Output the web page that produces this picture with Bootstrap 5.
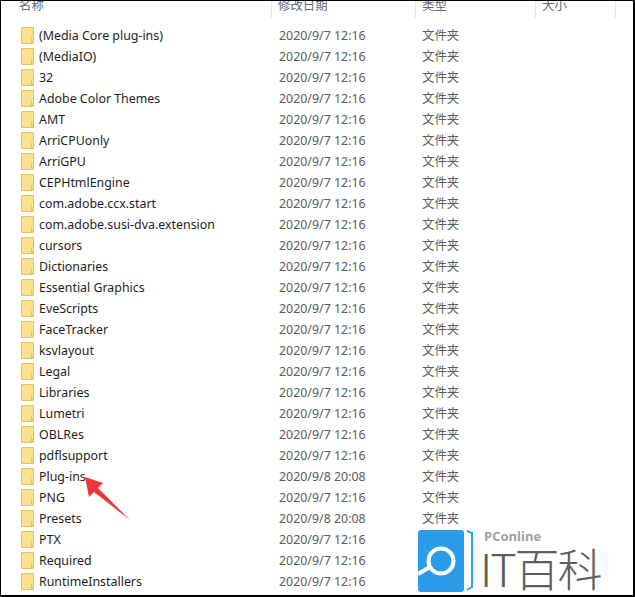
<!DOCTYPE html>
<html lang="zh-CN">
<head>
  <meta charset="UTF-8" />
  <title>Plug-ins</title>
  <link href="https://cdn.jsdelivr.net/npm/bootstrap@5.3.2/dist/css/bootstrap.min.css" rel="stylesheet" />
  <style>
    html, body { height: 597px; overflow: hidden; background: #fff; }
    .shot-frame {
      position: relative;
      height: 597px;
      overflow: hidden;
      border: solid #000;
      border-width: 1px 2px 2px 1px;
      font-family: "Noto Sans", "Noto Sans CJK SC", sans-serif;
      font-size: 12.4px;
    }
    .head-row { height: 22px; margin-top: -5px; margin-bottom: 7px; color: #5f6b76; }
    .head-cell { height: 100%; padding-left: 6px; border-right: 1px solid #e5e5e5; line-height: 20px; }
    .col-name { width: 271px; padding-left: 38px; }
    .head-row .col-name { padding-left: 18px; }
    .col-date { width: 144px; }
    .col-type { width: 120px; }
    .col-size { width: 80px; }
    .file-row { height: 21px; line-height: 21px; color: #5c5c5c; white-space: nowrap; }
    .file-name { color: #1e1e1e; }
    .file-row .col-date { padding-left: 7px; }
    .file-row .col-type { padding-left: 6px; }
    .folder-ico { position: absolute; left: 20px; width: 13px; height: 17px; margin-top: 2px; }
    .pin-arrow { position: absolute; left: 80px; top: 471px; }
    .brand-box { position: absolute; left: 413px; top: 526px; right: 0; bottom: 0; background: #fff; }
    .brand-logo { position: absolute; left: 1px; top: 0; }
    .brand-top { position: absolute; left: 70px; top: 2px; color: #a0a0a0; font: 700 13px/14px "Open Sans", sans-serif; }
    .brand-big {
      position: absolute; left: 66px; top: 18px;
      color: #5d5d5d; font: 300 45px/46px "Noto Sans CJK SC", sans-serif;
      letter-spacing: -2px; white-space: nowrap;
    }
  </style>
</head>
<body>
  <div class="shot-frame">
    <div class="head-row d-flex">
      <div class="head-cell col-name">名称</div>
      <div class="head-cell col-date">修改日期</div>
      <div class="head-cell col-type">类型</div>
      <div class="head-cell col-size">大小</div>
    </div>
    <div id="fileList"></div>

    <svg class="pin-arrow" width="54" height="52" viewBox="0 0 54 52">
      <polygon points="4,5 22,11 17,16 49,48 13,20 8,25" fill="#f0353a"/>
    </svg>

    <div class="brand-box">
      <svg class="brand-logo" width="62" height="66" viewBox="0 0 62 66">
        <rect x="3" y="3" width="46" height="62" rx="3" fill="#2a9ce8"/>
        <line x1="3" y1="47" x2="15" y2="40" stroke="#fff" stroke-width="4"/>
        <circle cx="26" cy="34" r="12.500" fill="#2a9ce8" stroke="#fff" stroke-width="4"/>
        <path d="M52 4 L57 6 V60 L52 63" fill="none" stroke="#2aa5ef" stroke-width="2"/>
      </svg>
      <div class="brand-top">PConline</div>
      <div class="brand-big">IT百科</div>
    </div>
  </div>

  <script>
    const names = ["(Media Core plug-ins)", "(MediaIO)", "32", "Adobe Color Themes", "AMT", "ArriCPUonly", "ArriGPU",
      "CEPHtmlEngine", "com.adobe.ccx.start", "com.adobe.susi-dva.extension", "cursors", "Dictionaries",
      "Essential Graphics", "EveScripts", "FaceTracker", "ksvlayout", "Legal", "Libraries", "Lumetri", "OBLRes",
      "pdflsupport", "Plug-ins", "PNG", "Presets", "PTX", "Required", "RuntimeInstallers"];
    const newer = ["Plug-ins", "Presets"];
    const folder = `<svg class="folder-ico" viewBox="0 0 13 17"><path d="M.5 .5H12.500V16.500H.5Z" fill="#fbe08e" stroke="#e8c25e"/><path d="M10 16V9L12 16Z" fill="#e8c25e"/></svg>`;

    document.getElementById("fileList").innerHTML = names.map(n => `
      <div class="file-row d-flex">
        ${folder}
        <div class="col-name file-name">${n}</div>
        <div class="col-date">${newer.includes(n) ? "2020/9/8 20:08" : "2020/9/7 12:16"}</div>
        <div class="col-type">文件夹</div>
      </div>`).join("");
  </script>
  <script src="https://cdn.jsdelivr.net/npm/bootstrap@5.3.2/dist/js/bootstrap.bundle.min.js"></script>
</body>
</html>
